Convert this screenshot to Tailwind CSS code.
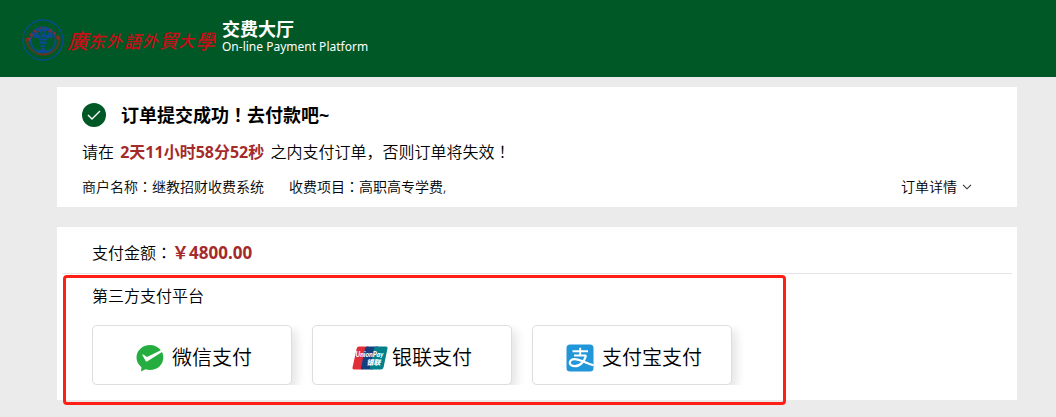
<!DOCTYPE html>
<html lang="zh-CN">
<head>
  <meta charset="UTF-8" />
  <meta name="viewport" content="width=device-width, initial-scale=1.0" />
  <title>交费大厅</title>
  <script src="https://cdn.jsdelivr.net/npm/@tailwindcss/browser@4"></script>
</head>
<body class="bg-[#ebebeb] text-black font-[350] font-['Noto_Sans','Noto_Sans_CJK_SC',sans-serif]">
  <!-- Header -->
  <header class="bg-[#005826] h-[77px] pl-[22px] pt-[18px] flex items-start">
    <svg class="w-[194px] h-11 shrink-0" viewBox="0 0 194 44" role="img" aria-label="廣东外語外貿大學">
      <defs>
        <path id="seal-top" d="M7 24 A14.500 14.500 0 0 1 35 24" />
      </defs>
      <circle cx="21" cy="22" r="20" fill="none" stroke="#0b4a8f" stroke-width="1.3" />
      <circle cx="21" cy="22" r="12.5" fill="none" stroke="#0b4a8f" stroke-width="1.8" />
      <path d="M4.500 20 A16.500 16.500 0 0 0 37.500 20" fill="none" stroke="#713323" stroke-width="2" stroke-dasharray="1.4 .5" />
      <text font-size="4.5" font-weight="700" fill="#a3201e" font-family="Noto Sans CJK TC"><textPath href="#seal-top">廣东外語外貿大學</textPath></text>
      <g fill="#0b4a8f">
        <path d="M16 10.500h10l3 2.500h-5v2h-2v-2h-2v2h-2v-2h-5z" />
        <path d="M11.500 14.500h5v2.500h2v3h-7zM30.500 14.500h-5v2.500h-2v3h7zM19 15.500h4v4h-4z" />
        <path d="M16.500 20.500h9v2h-9zM17.500 23.500h7v2.500h-7zM18.500 27h5v2h-5z" />
        <path d="M13 33.500q6-1 8-4.500q2 3.500 8 4.500q-8 3.500-16 0z" />
      </g>
      <g fill="#c80d17" font-family="Noto Sans CJK TC" font-style="italic" font-weight="500">
        <text x="45" y="31" font-size="21">廣</text>
        <text x="66" y="30" font-size="17">东</text>
        <text x="84" y="29" font-size="16">外</text>
        <text x="102" y="30" font-size="17">語</text>
        <text x="120" y="29" font-size="16">外</text>
        <text x="137" y="30" font-size="19">貿</text>
        <text x="156" y="29" font-size="16">大</text>
        <text x="173" y="31" font-size="20">學</text>
      </g>
    </svg>
    <div class="pl-[6px] text-white">
      <h1 class="text-[18px] leading-[22px] font-bold">交费大厅</h1>
      <p class="text-[12px] leading-[14px] font-normal">On-line Payment Platform</p>
    </div>
  </header>

  <main class="pl-[57px] pr-[39px] pt-[10px] pb-4">
    <!-- Order status -->
    <section class="bg-white pl-[25px] pr-[45px] pt-[15px] pb-2">
      <div class="flex items-center gap-[15px]">
        <svg class="size-6" viewBox="0 0 24 24" fill="none">
          <circle cx="12" cy="12" r="12" fill="#005826" />
          <path d="M6 12l4 4l8-8" stroke="#fff" stroke-width="1.4" />
        </svg>
        <h2 class="text-[18px] leading-6 font-bold">订单提交成功<span lang="ja" class="font-['Noto_Sans_CJK_JP']">！</span>去付款吧~</h2>
      </div>
      <p class="mt-3 text-[16px] leading-6">请在 <strong class="mx-[2px] font-bold text-[#a52a2a]">2天11小时58分52秒</strong> 之内支付订单，否则订单将失效<span lang="ja" class="font-['Noto_Sans_CJK_JP']">！</span></p>
      <div class="mt-[10px] flex items-center justify-between text-[14px] leading-6">
        <div class="flex gap-[25px]">
          <span>商户名称<span lang="ja" class="font-['Noto_Sans_CJK_JP']">：</span>继教招财收费系统</span>
          <span>收费项目<span lang="ja" class="font-['Noto_Sans_CJK_JP']">：</span>高职高专学费,</span>
        </div>
        <button type="button" class="flex items-center gap-[5px]">
          订单详情
          <svg class="w-[10px] h-[6px]" viewBox="0 0 10 6" fill="none" stroke="#333" stroke-width="1.1"><path d="M1 .8L5 4.800L9 .8" /></svg>
        </button>
      </div>
    </section>

    <!-- Payment -->
    <section class="relative bg-white mt-5 px-[5px] pb-[15px]">
      <p class="border-b border-[#e6e6e6] pl-[30px] pt-[13px] pb-2 text-[16px] leading-6">支付金额<span lang="ja" class="font-['Noto_Sans_CJK_JP']">：</span><strong class="font-bold text-[17px] text-[#a52a2a]">￥4800.00</strong></p>
      <h3 class="pl-[30px] pt-[10px] text-[16px] leading-6">第三方支付平台</h3>
      <div class="ml-[30px] mt-[17px] flex gap-5 overflow-hidden">
        <button type="button" class="w-[200px] h-[60px] shrink-0 flex items-center justify-center gap-2 pl-1 pt-[6px] bg-white border border-[#ddd] rounded-[5px] shadow-[5px_5px_10px_#e6e6e6] text-[20px]">
          <svg class="size-7" viewBox="0 0 28 28">
            <path d="M14 1C6.500 1 .5 6.500 .5 13.500C.5 17.500 2.500 21 5.500 23.300L5 27.500L9.500 25.200C11 25.700 12.500 26 14 26C21.500 26 27.300 20.500 27.300 13.500C27.300 11.500 26.800 9.700 26 8L11.500 17.300Q10.500 18 9.700 17L6.300 11Q6.200 10 7.300 10.600L11 13L24.800 6.200C22.300 3 18.400 1 14 1z" fill="#25ae3f" />
          </svg>
          <span>微信支付</span>
        </button>
        <button type="button" class="w-[200px] h-[60px] shrink-0 flex items-center justify-center gap-1 pt-[6px] bg-white border border-[#ddd] rounded-[5px] shadow-[5px_5px_10px_#e6e6e6] text-[20px]">
          <svg class="w-9 h-6" viewBox="0 0 36 24">
            <path d="M7 .5H16L10.500 23.500H2Q0 23.500 .5 21.500L4.700 2.500Q5.200 .5 7 .5z" fill="#e02f38" />
            <path d="M15.500 .5H26L20.500 23.500H10Q8.500 23.500 9 21.500L13 2.500Q13.500 .5 15.500 .5z" fill="#15407f" />
            <path d="M24 .5H34Q36 .5 35.500 2.500L31.500 21.500Q31 23.500 29 23.500H19Q17.500 23.500 18 21.500L22 2.500Q22.500 .5 24 .5z" fill="#04808a" />
            <text x="3.500" y="11" font-family="Lato" font-size="6.800" font-weight="900" font-style="italic" fill="#fff">UnionPay</text>
            <text x="14.500" y="18.500" font-family="Noto Sans CJK SC" font-size="7" font-weight="900" font-style="italic" fill="#fff">银联</text>
          </svg>
          <span>银联支付</span>
        </button>
        <button type="button" class="w-[200px] h-[60px] shrink-0 flex items-center justify-center gap-2 pl-1 pt-[6px] bg-white border border-[#ddd] rounded-[5px] shadow-[5px_5px_10px_#e6e6e6] text-[20px]">
          <svg class="size-7" viewBox="0 0 28 28">
            <rect x=".5" y=".5" width="27" height="27" rx="3.500" fill="#2196d9" />
            <g fill="none" stroke="#fff">
              <path d="M6.500 7.200H22M14.200 3.800V11.500M8 11.500H20.300" stroke-width="1.900" />
              <path d="M20 11.500C18.500 17.500 14 22.200 9 22.200C5.500 22.200 3.800 20.600 3.800 18.700C3.800 16.800 5.500 15.200 8.500 15.200C13.500 15.200 18.500 18.500 27.500 21.300" stroke-width="2.200" />
            </g>
          </svg>
          <span>支付宝支付</span>
        </button>
      </div>

      <!-- Highlight frame over the payment options -->
      <div class="absolute left-[6px] top-12 w-[723px] h-[130px] border-3 border-[#ff1f14] rounded-[4px] pointer-events-none"></div>
    </section>
  </main>
</body>
</html>
